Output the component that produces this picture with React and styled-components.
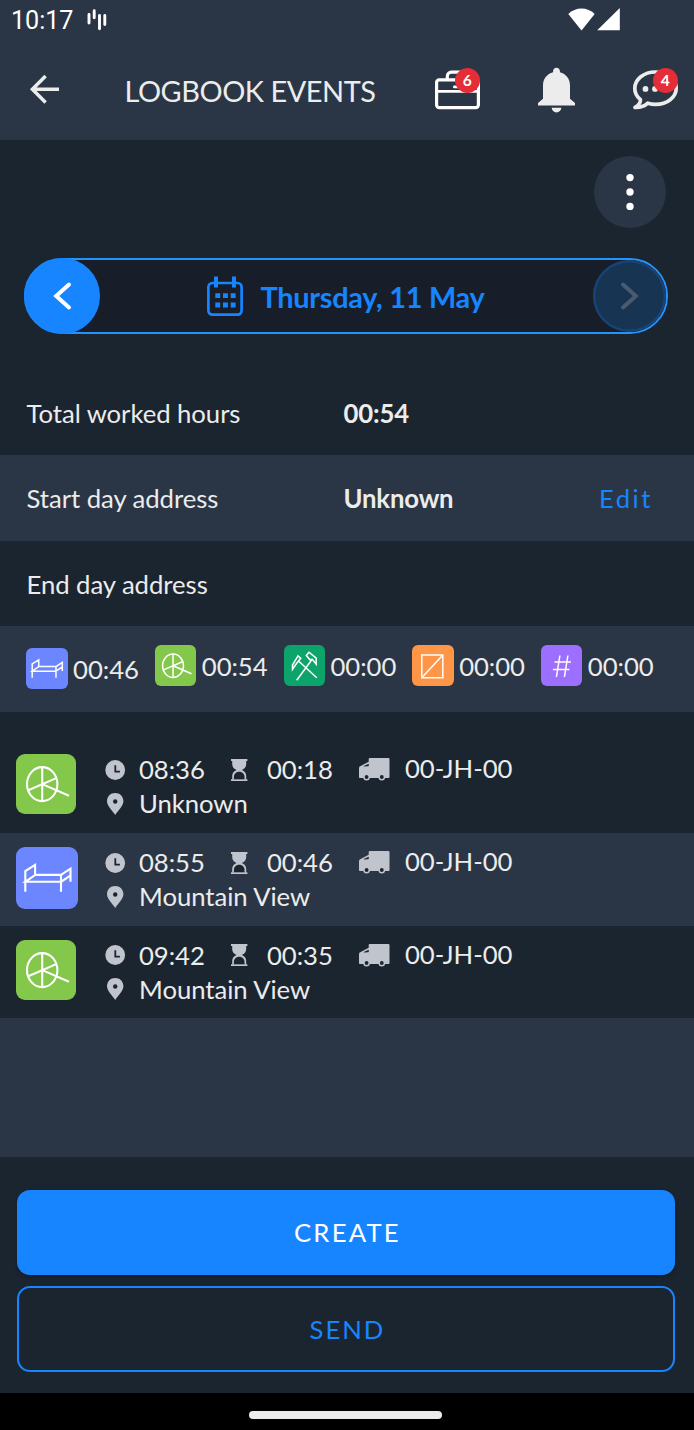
import React from 'react';
import styled, { createGlobalStyle } from 'styled-components';

const colors = {
  panel: '#2a3645',
  page: '#1b2530',
  field: '#171e29',
  primary: '#1685ff',
  text: '#ececec',
  muted: '#c0c4cd',
  danger: '#e42d36',
};

const GlobalStyle = createGlobalStyle`
  * {
    box-sizing: border-box;
  }

  body {
    margin: 0;
    background: ${colors.page};
    font-family: Lato, sans-serif;
  }

  button {
    font-family: inherit;
    border: none;
    padding: 0;
    cursor: pointer;
  }

  svg {
    display: block;
    flex-shrink: 0;
    overflow: visible;
  }
`;

const Screen = styled.div`
  width: 694px;
  height: 1430px;
  display: flex;
  flex-direction: column;
  overflow: hidden;
  background: ${colors.page};
  color: ${colors.text};
  font-size: 25.7px;
  letter-spacing: -0.05px;
`;

const StatusBar = styled.div`
  height: 40px;
  flex-shrink: 0;
  display: flex;
  align-items: center;
  padding: 0 74px 0 11px;
  background: ${colors.panel};
  color: white;
`;

const StatusTime = styled.span`
  font-family: Roboto, sans-serif;
  font-size: 25.2px;
  line-height: 40px;
  width: 76px;
  padding-top: 1px;
`;

const StatusIcons = styled.div`
  display: flex;
  gap: 2px;
  margin: -1px 0 0 auto;
`;

const AppBar = styled.header`
  height: 100.4px;
  flex-shrink: 0;
  display: flex;
  align-items: center;
  padding: 0 16px 0 30px;
  background: ${colors.panel};
`;

const Title = styled.h1`
  margin: 1px 0 0 64.5px;
  width: 310.5px;
  font-size: 28.9px;
  font-weight: 400;
  letter-spacing: -0.45px;
  white-space: nowrap;
`;

const HeaderAction = styled.button`
  position: relative;
  width: ${({ $width }) => $width}px;
  height: 46px;
  background: none;
  margin: 0 0 0 ${({ $gap }) => $gap || 0}px;
`;

const Badge = styled.span`
  position: absolute;
  top: 0.5px;
  right: 0;
  width: 25.5px;
  height: 25.5px;
  border-radius: 50%;
  background: ${colors.danger};
  color: white;
  font-size: 15.5px;
  font-weight: 700;
  line-height: 25px;
  text-align: center;
`;

const Toolbar = styled.div`
  display: flex;
  justify-content: flex-end;
  padding: 16px 28px 30px 0;
`;

const MenuButton = styled.button`
  width: 72px;
  height: 72px;
  border-radius: 50%;
  background: ${colors.panel};
  display: flex;
  align-items: center;
  justify-content: center;
`;

const DatePicker = styled.div`
  height: 75.5px;
  flex-shrink: 0;
  margin: 0 26px 36px 24px;
  display: flex;
  align-items: center;
  justify-content: space-between;
  border: 2px solid #2493fa;
  border-radius: 38px;
  background: ${colors.field};
`;

const DateButton = styled.button`
  width: 76px;
  height: 75.5px;
  margin: -2px;
  border-radius: 50%;
  display: flex;
  align-items: center;
  justify-content: center;
  color: white;
  background: ${colors.primary};

  &:disabled {
    width: 73px;
    height: 71.5px;
    margin: 0;
    color: #4a5b70;
    background: #173452;
    box-shadow: inset 0 0 0 2.5px #1a4272;
  }
`;

const DateLabel = styled.div`
  display: flex;
  align-items: center;
  gap: 18px;
  color: ${colors.primary};
  font-size: 28.9px;
  font-weight: 700;
  letter-spacing: -0.3px;
  white-space: nowrap;
`;

const InfoRow = styled.div`
  height: 85.5px;
  flex-shrink: 0;
  display: grid;
  grid-template-columns: 317px 1fr auto;
  align-items: center;
  padding: 0 41px 0 26.5px;
  background: ${({ $shaded }) => ($shaded ? colors.panel : 'transparent')};

  strong {
    letter-spacing: -0.15px;
  }
`;

const EditButton = styled.button`
  background: none;
  color: ${colors.primary};
  font-size: 25.7px;
  letter-spacing: 2.5px;
`;

const Summary = styled.div`
  height: 85.8px;
  flex-shrink: 0;
  display: grid;
  grid-template-columns: repeat(5, 128.7px);
  align-items: start;
  padding: 18.7px 0 0 26.3px;
  background: ${colors.panel};
`;

const SummaryItem = styled.div`
  display: flex;
  align-items: center;
  gap: 5.5px;
  padding-top: ${({ $offset }) => $offset || 0}px;
`;

const SummaryTime = styled.span`
  margin-top: 1px;
`;

const Tile = styled.div`
  width: ${({ $size }) => $size}px;
  height: ${({ $size }) => $size}px;
  flex-shrink: 0;
  border-radius: ${({ $size }) => ($size > 50 ? 9 : 6)}px;
  background: ${({ $color }) => $color};
`;

const EventList = styled.main`
  flex: 1;
  padding-top: 28.3px;
  display: flex;
  flex-direction: column;
`;

const EventRow = styled.div`
  height: 92.6px;
  flex-shrink: 0;
  display: grid;
  grid-template-columns: 89px 1fr;
  padding: 14px 0 0 16px;
  background: ${({ $shaded }) => ($shaded ? colors.panel : 'transparent')};
`;

const EventDetails = styled.div`
  display: grid;
  grid-template-columns: 34px 92px 36px 92px 46px 1fr;
  grid-template-rows: 34px 34px;
  align-items: center;
  margin-top: -2px;
  line-height: 34px;

  svg {
    color: ${colors.muted};
    margin-top: 1px;
  }
`;

const Plate = styled.span`
  margin-top: -2px;
`;

const Place = styled.span`
  grid-column: 2 / -1;
`;

const EmptySpace = styled.div`
  flex: 1;
  background: ${colors.panel};
`;

const Footer = styled.footer`
  height: 235.6px;
  flex-shrink: 0;
  display: flex;
  flex-direction: column;
  gap: 11px;
  padding: 32.5px 19.5px 0 17.4px;
`;

const ActionButton = styled.button`
  height: 85.4px;
  border-radius: 13px;
  font-size: 25.7px;
  letter-spacing: ${({ $outlined }) => ($outlined ? 2 : 2.2)}px;
  padding: 0 0 ${({ $outlined }) => ($outlined ? 0 : 1)}px 3px;
  color: ${({ $outlined }) => ($outlined ? colors.primary : 'white')};
  background: ${({ $outlined }) => ($outlined ? 'transparent' : colors.primary)};
  border: ${({ $outlined }) => ($outlined ? `2px solid ${colors.primary}` : 'none')};
  box-shadow: ${({ $outlined }) => ($outlined ? 'none' : '0 2px 4px rgba(0, 0, 0, 0.25)')};
`;

const NavBar = styled.div`
  height: 37px;
  flex-shrink: 0;
  display: flex;
  justify-content: center;
  padding: 18px 3px 0 0;
  background: black;
`;

const NavHandle = styled.div`
  width: 193px;
  height: 7.5px;
  border-radius: 4px;
  background: ${colors.text};
`;

const BarsIcon = () => (
  <svg width="20" height="22" viewBox="0 0 20 22" fill="none" stroke="white" strokeWidth="2.9" strokeLinecap="round">
    <path d="M2 5.5v8.5M7.2 1.8v7M12.5 6.5v13.2M17.8 6.5v9" />
  </svg>
);

const WifiIcon = () => (
  <svg width="27" height="23" viewBox="0 0 27 23" fill="white">
    <path d="M0.3 6C7.5-1.4 19.5-1.4 26.7 6L13.5 22.5Z" />
  </svg>
);

const SignalIcon = () => (
  <svg width="23" height="23" viewBox="0 0 23 23" fill="white">
    <path d="M22.8 0v22.3H0.2Z" />
  </svg>
);

const BackIcon = () => (
  <svg width="30" height="30" viewBox="0 0 30 30" fill="none" stroke={colors.text} strokeWidth="3.5">
    <path d="M29 14.3H3M15.6 1.1L2.4 14.3l13.2 13.2" />
  </svg>
);

const BriefcaseIcon = () => (
  <svg width="45" height="46" viewBox="0 0 45 46" fill="none" stroke="white" strokeWidth="3.2">
    <rect x="1.6" y="12.8" width="41.8" height="27.8" rx="2.6" />
    <path d="M12.3 12.4V9.2a4 4 0 0 1 4-4H28a4 4 0 0 1 4 4v3.2" />
    <path d="M2 24.4h41" strokeWidth="2.6" />
    <path d="M19.3 19.9h7" strokeLinecap="round" strokeWidth="2.6" />
  </svg>
);

const BellIcon = () => (
  <svg width="37" height="46" viewBox="0 0 37 46" fill={colors.text}>
    <path d="M18.5 0.7c2 0 3.4 1.5 3.4 3.4v1.2c6.2 1.6 10.1 6.6 10.1 13.2v13.2l5 4.2v2.7H0v-2.7l5-4.2V18.5C5 11.9 8.9 6.9 15.1 5.3V4.1c0-1.9 1.4-3.4 3.4-3.4Z" />
    <path d="M13.7 40.7h9.6a4.8 4.8 0 0 1-9.6 0Z" />
  </svg>
);

const ChatIcon = () => (
  <svg width="46" height="46" viewBox="0 0 46 46" fill={colors.text}>
    <path
      d="M23.4 5C11.8 5 2.8 12.1 2.8 21.5c0 4.5 2.3 8.3 5.6 11.2.3 3-1.4 5.200-5.400 7.700 5.600.3 9.800-1.400 12.800-4.200 2.500.8 5 1.200 7.800 1.200 11.500 0 20.600-7.200 20.600-16.200S34.900 5 23.400 5Z"
      fill="none"
      stroke={colors.text}
      strokeWidth="3.7"
      strokeLinejoin="round"
    />
    <circle cx="13.5" cy="21.9" r="2.9" />
    <circle cx="23" cy="21.9" r="2.9" />
    <circle cx="32.4" cy="21.9" r="2.9" />
  </svg>
);

const DotsIcon = () => (
  <svg width="8" height="38" viewBox="0 0 8 38" fill="white">
    <circle cx="4" cy="4.6" r="3.7" />
    <circle cx="4" cy="19" r="3.7" />
    <circle cx="4" cy="33.4" r="3.7" />
  </svg>
);

const Chevron = ({ right }) => (
  <svg width="18" height="28" viewBox="0 0 18 28" fill="none" stroke="currentColor" strokeWidth="4" strokeLinecap="round">
    <path d={right ? 'M3 2.5L15.8 14 3 25.5' : 'M16 2.5L3.2 14 16 25.5'} />
  </svg>
);

const CalendarIcon = () => (
  <svg width="36" height="40" viewBox="0 0 36 40" fill={colors.primary}>
    <rect x="1.4" y="7" width="33.2" height="31.6" rx="4" fill="none" stroke={colors.primary} strokeWidth="2.7" />
    <path d="M7 .5h4v11H7zM25 .5h4v11h-4z" />
    <path d="M8.3 17.2h4.9v4.9H8.3zM16 17.2h4.9v4.9H16zM23.7 17.2h4.9v4.9h-4.9zM8.3 26.5h4.9v4.9H8.3zM16 26.5h4.9v4.9H16zM23.7 26.5h4.9v4.9h-4.9z" />
  </svg>
);

const ClockIcon = () => (
  <svg width="20" height="20" viewBox="0 0 20 20">
    <circle cx="10.2" cy="10" r="9.9" fill="currentColor" />
    <path d="M10.3 5.2v6.4h4.6" fill="none" stroke={colors.page} strokeWidth="1.8" />
  </svg>
);

const HourglassIcon = () => (
  <svg width="17" height="22" viewBox="0 0 17 22" fill="currentColor">
    <path d="M0 0h16.4v1.9H0zM0 20.2h16.4v1.9H0z" />
    <path d="M1.2 1.5h14v3.5c0 3-1.7 4.8-4.4 6 2.7 1.2 4.4 3 4.4 6v3.5h-14V17c0-3 1.7-4.8 4.4-6-2.7-1.2-4.4-3-4.4-6Z" />
    <path d="M2.9 20.2V18c0-3.1 2.2-5.2 5.3-5.2s5.3 2.1 5.3 5.2v2.2Z" fill={colors.page} />
  </svg>
);

const VanIcon = () => (
  <svg width="31" height="23" viewBox="0 0 31 23" fill="currentColor">
    <path d="M10.6 0h18.6c.8 0 1.3.5 1.3 1.2v18c0 .5-.3.8-.8.8H.8c-.5 0-.8-.3-.8-.8v-8.7C0 9.3.4 8.7 1.2 8.3L9.7 3.7V.9c0-.5.4-.9.9-.9Z" />
    <path d="M4.9 8.3L9.5 6v2Z" fill={colors.page} stroke={colors.page} strokeWidth=".4" />
    <circle cx="7.6" cy="19.2" r="3.3" />
    <circle cx="22.8" cy="19.2" r="3.3" />
    <circle cx="7.6" cy="19" r="1.9" fill={colors.page} />
    <circle cx="22.8" cy="19" r="1.9" fill={colors.page} />
  </svg>
);

const PinIcon = () => (
  <svg width="20" height="22" viewBox="0 0 20 22">
    <path d="M10.2 0c4.7 0 8.2 3.5 8.2 8.1 0 5.2-5.5 9.7-8.2 13.9C7.5 17.8 2 13.3 2 8.1 2 3.5 5.5 0 10.2 0Z" fill="currentColor" />
    <circle cx="10.2" cy="8.5" r="2.2" fill={colors.page} />
  </svg>
);

// Activity drawings, each on the grid of the tile that it is shown in
const activities = {
  rest: {
    color: '#6c86ff',
    box: 62,
    art: <path d="M9.3 44.7V24l9.8-6.2V28L9.3 34.8H45M19.1 27.9H45V44.7M45 27.9l9.5-6.2v13M45 34.8l9.5-6.3" />,
  },
  drive: {
    color: '#83c74b',
    box: 60,
    art: (
      <>
        <ellipse cx="26.2" cy="30.1" rx="15.2" ry="17" />
        <path d="M26.2 13v34M12.3 36.2l28.5-12.3M26.2 30.1l26.8 11.6" />
      </>
    ),
  },
  work: {
    color: '#0da46c',
    box: 41.3,
    art: (
      <path d="M12.7 35.3L28 14.5M32.8 32.7L14.5 16M8.5 24.3V20L14 10.9l2.7 2.4-4 5ZM22.3 10.5L25 7.2l7.2 5.9v6L28.3 14.3 26 14.8Z" />
    ),
  },
  available: {
    color: '#ff9547',
    box: 41.3,
    art: <path d="M9.8 10h21v22.7h-21ZM10 32.5L30.6 10.2" />,
  },
  other: {
    color: '#9c6fff',
    box: 41.3,
    art: <path d="M12 24.6h16.5M13.5 17H30M18.9 10.5l-3.5 21.5M26.9 10.5L23.4 32" />,
  },
};

const ActivityTile = ({ type, size }) => {
  const { color, box, art } = activities[type];
  const stroke = size > 50 ? 2.1 : 1.5;
  return (
    <Tile $size={size} $color={color}>
      <svg
        width={size}
        height={size}
        viewBox={`0 0 ${box} ${box}`}
        fill="none"
        stroke="white"
        strokeWidth={(stroke * box) / size}
      >
        {art}
      </svg>
    </Tile>
  );
};

const totals = [
  { type: 'rest', time: '00:46', offset: 2.7 },
  { type: 'drive', time: '00:54' },
  { type: 'work', time: '00:00' },
  { type: 'available', time: '00:00' },
  { type: 'other', time: '00:00' },
];

const events = [
  { type: 'drive', start: '08:36', duration: '00:18', plate: '00-JH-00', place: 'Unknown' },
  { type: 'rest', start: '08:55', duration: '00:46', plate: '00-JH-00', place: 'Mountain View' },
  { type: 'drive', start: '09:42', duration: '00:35', plate: '00-JH-00', place: 'Mountain View' },
];

const App = () => {
  return (
    <>
      <GlobalStyle />
      <Screen>
        <StatusBar>
          <StatusTime>10:17</StatusTime>
          <BarsIcon />
          <StatusIcons>
            <WifiIcon />
            <SignalIcon />
          </StatusIcons>
        </StatusBar>

        <AppBar>
          <BackIcon />
          <Title>LOGBOOK EVENTS</Title>
          <HeaderAction $width={45} aria-label="Jobs">
            <BriefcaseIcon />
            <Badge>6</Badge>
          </HeaderAction>
          <HeaderAction $width={37} $gap={58} aria-label="Notifications">
            <BellIcon />
          </HeaderAction>
          <HeaderAction $width={46} $gap={57} aria-label="Messages">
            <ChatIcon />
            <Badge>4</Badge>
          </HeaderAction>
        </AppBar>

        <Toolbar>
          <MenuButton aria-label="Menu">
            <DotsIcon />
          </MenuButton>
        </Toolbar>

        <DatePicker>
          <DateButton aria-label="Previous day">
            <Chevron />
          </DateButton>
          <DateLabel>
            <CalendarIcon />
            Thursday, 11 May
          </DateLabel>
          <DateButton disabled aria-label="Next day">
            <Chevron right />
          </DateButton>
        </DatePicker>

        <InfoRow>
          <span>Total worked hours</span>
          <strong>00:54</strong>
        </InfoRow>
        <InfoRow $shaded>
          <span>Start day address</span>
          <strong>Unknown</strong>
          <EditButton>Edit</EditButton>
        </InfoRow>
        <InfoRow>
          <span>End day address</span>
        </InfoRow>

        <Summary>
          {totals.map(({ type, time, offset }) => (
            <SummaryItem key={type} $offset={offset}>
              <ActivityTile type={type} size={41.3} />
              <SummaryTime>{time}</SummaryTime>
            </SummaryItem>
          ))}
        </Summary>

        <EventList>
          {events.map((event, index) => (
            <EventRow key={event.start} $shaded={index % 2 === 1}>
              <ActivityTile type={event.type} size={event.type === 'rest' ? 62 : 60} />
              <EventDetails>
                <ClockIcon />
                <span>{event.start}</span>
                <HourglassIcon />
                <span>{event.duration}</span>
                <VanIcon />
                <Plate>{event.plate}</Plate>
                <PinIcon />
                <Place>{event.place}</Place>
              </EventDetails>
            </EventRow>
          ))}
          <EmptySpace />
        </EventList>

        <Footer>
          <ActionButton>CREATE</ActionButton>
          <ActionButton $outlined>SEND</ActionButton>
        </Footer>

        <NavBar>
          <NavHandle />
        </NavBar>
      </Screen>
    </>
  );
};

export default App;
